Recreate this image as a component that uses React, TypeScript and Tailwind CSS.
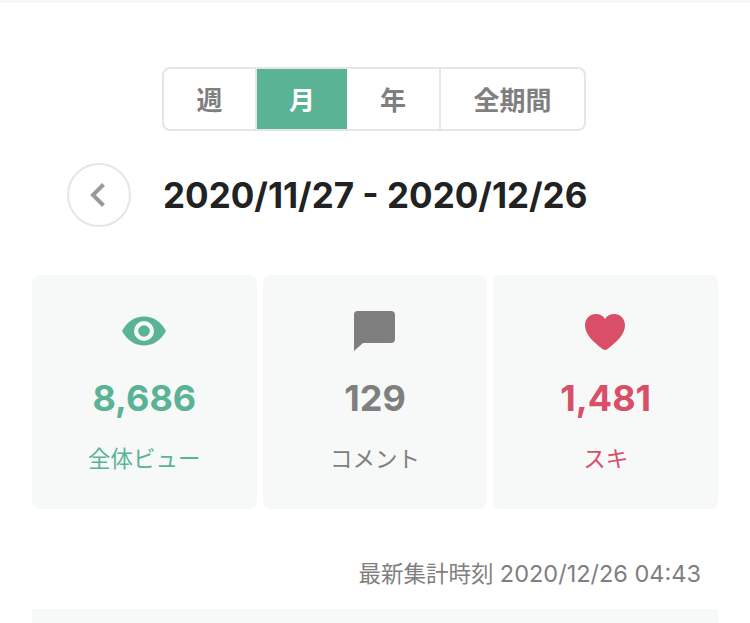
const font = "font-['Inter','Noto_Sans_CJK_JP',sans-serif]"

function EyeIcon() {
    return (
        <svg width="44" height="30" viewBox="0 0 44 30">
            <path d="M0 15C5 5.5 13 0.5 22 0.5S39 5.5 44 15C39 24.5 31 29.5 22 29.5S5 24.5 0 15Z" fill="#5bb396" />
            <circle cx="22" cy="15" r="10" fill="#f7f9f9" />
            <circle cx="22" cy="15" r="5.8" fill="#5bb396" />
        </svg>
    )
}

function CommentIcon() {
    return (
        <svg className="mr-[1px]" width="41" height="40" viewBox="0 0 41 40">
            <path d="M3.5 0H37A4 4 0 0 1 41 4V28A4 4 0 0 1 37 32H9L0 40V3.5A3.5 3.5 0 0 1 3.5 0Z" fill="#7f7f7f" />
        </svg>
    )
}

function HeartIcon() {
    return (
        <svg className="mt-[2px] mr-[1px]" width="40" height="36" viewBox="0 0 40 36">
            <path d="M20 36C18.8 36 17.8 35.4 16.5 34.3C8 27.5 0 20.5 0 11.3C0 4.8 4.8 0 11 0C14.7 0 18 1.8 20 5C22 1.8 25.3 0 29 0C35.2 0 40 4.8 40 11.3C40 20.5 32 27.5 23.5 34.3C22.2 35.4 21.2 36 20 36Z" fill="#d94f67" />
        </svg>
    )
}

function StatCard({ icon, value, label, color }: { icon: React.ReactNode; value: string; label: string; color: string }) {
    return (
        <div className="flex h-[234px] flex-col items-center rounded-lg bg-[#f7f9f9]">
            <div className="mt-[36px] flex h-[40px] items-center justify-center">{icon}</div>
            <div className={`mt-[25px] text-[36px] leading-[44px] font-bold ${color}`}>{value}</div>
            <div className={`mt-[24px] text-[22.5px] leading-[30px] ${color}`}>{label}</div>
        </div>
    )
}

export default function App() {
    return (
        <div className={`relative h-[623px] w-[750px] overflow-hidden bg-white ${font}`}>
            <div className="h-[3px] bg-[#f8f8f8]" />

            <div className="mt-[64px] flex justify-center pr-[2px]">
                <div className="flex h-[64px] w-[424px] overflow-hidden rounded-lg border-2 border-[#e6e6e6] text-[26px] font-bold text-[#7f7f7f]">
                    <div className="flex w-[93px] items-center justify-center border-r-2 border-[#e6e6e6] pt-[2px]">週</div>
                    <div className="flex w-[90px] items-center justify-center bg-[#5bb396] pt-[2px] text-white">月</div>
                    <div className="flex w-[94px] items-center justify-center border-r-2 border-[#e6e6e6] pt-[2px]">年</div>
                    <div className="flex flex-1 items-center justify-center pt-[2px]">全期間</div>
                </div>
            </div>

            <div className="mt-[32px] flex items-center pl-[67px]">
                <div className="flex h-[64px] w-[64px] items-center justify-center rounded-full border-2 border-[#e6e6e6]">
                    <svg className="mr-[3px]" width="18" height="26" viewBox="0 0 18 26" fill="none">
                        <path d="M14.5 2.5L4 13L14.5 23.5" stroke="#9a9a9a" strokeWidth="4" />
                    </svg>
                </div>
                <div className="ml-[32px] text-[35px] leading-[40px] font-bold text-[#222222]">2020/11/27 - 2020/12/26</div>
            </div>

            <div className="mt-[48px] grid grid-cols-3 gap-[6px] px-[32px]">
                <StatCard icon={<EyeIcon />} value="8,686" label="全体ビュー" color="text-[#5bb396]" />
                <StatCard icon={<CommentIcon />} value="129" label="コメント" color="text-[#7f7f7f]" />
                <StatCard icon={<HeartIcon />} value="1,481" label="スキ" color="text-[#d94f67]" />
            </div>

            <div className="mt-[50px] pr-[49px] text-right text-[22.5px] leading-[30px] text-[#7f7f7f]">
                最新集計時刻 <span className="text-[23.5px]">2020/12/26 04:43</span>
            </div>

            <div className="mx-[32px] mt-[20px] h-[20px] bg-[#f7f9f9]" />
        </div>
    )
}
